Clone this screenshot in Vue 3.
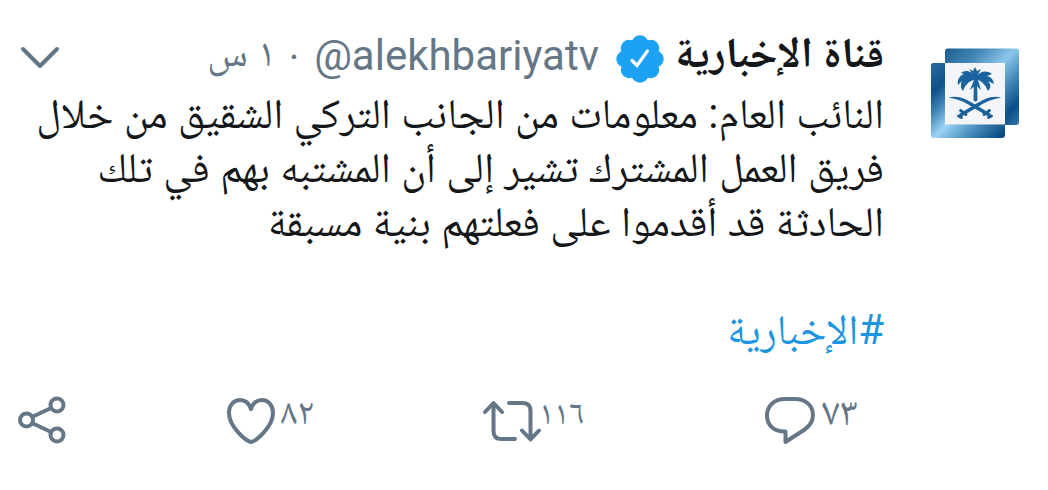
<template>
  <article class="tweet" dir="rtl">
    <div class="avatar">
      <svg viewBox="0 0 90 92" width="90" height="92">
        <defs>
          <linearGradient id="back" x1="0" y1="0" x2="1" y2="1">
            <stop offset="0" stop-color="#1b5c90" />
            <stop offset="0.25" stop-color="#4488b7" />
            <stop offset="0.48" stop-color="#8cc6ea" />
            <stop offset="0.68" stop-color="#3f83b4" />
            <stop offset="0.85" stop-color="#0b4f88" />
            <stop offset="1" stop-color="#3477a8" />
          </linearGradient>
          <linearGradient id="front" x1="0" y1="0.1" x2="0.9" y2="1">
            <stop offset="0" stop-color="#22669c" />
            <stop offset="0.18" stop-color="#0f5189" />
            <stop offset="0.32" stop-color="#3c80b2" />
            <stop offset="0.52" stop-color="#9bd3f5" />
            <stop offset="0.75" stop-color="#4b8fbd" />
            <stop offset="1" stop-color="#0d4d83" />
          </linearGradient>
        </defs>
        <rect x="15" y="1.500" width="74" height="76.500" rx="3" fill="url(#back)" />
        <path d="M3 16H15V77.500H75V88Q75 91 72 91H4Q1 91 1 88V18Q1 16 3 16Z" fill="url(#front)" />
        <rect x="15" y="16" width="60" height="61.500" fill="#f3f5f9" />
        <g fill="#1b649f">
          <path d="M44 32H47L47.500 53Q45.500 56 43.500 53Z" />
          <path d="M45 31C43 24 35 22 31 26L34 27C29 29 27 33 28 38L32 34C30 38 31 42 33 44C35 38 39 34 44 33L40 43C45 40 46 36 46 33C46 37 47 40 51 43L48 33C53 35 56 39 58 44C62 40 60 36 58 34L64 37C63 32 61 30 57 29L62 27C57 23 50 24 47 29L51 22L47 24L45 20L43 24L39 22Z" />
          <path d="M18.500 50.500C28 48 36 52 46 58L61 67L59 70L44 61C35 55 28 52 18.500 50.500Z" />
          <path d="M71.500 50.500C62 48 54 52 44 58L29 67L31 70L46 61C55 55 62 52 71.500 50.500Z" />
        </g>
        <g fill="none" stroke="#1b5f93" stroke-width="2.800" stroke-linecap="round">
          <path d="M30.500 63.500 36 67.500M28.500 69 31.500 70.500" />
          <path d="M59.500 63.500 54 67.500M61.500 69 58.500 70.500" />
        </g>
      </svg>
    </div>

    <div class="main">
      <header class="head">
        <span class="name">قناة الإخبارية</span>
        <svg class="badge" viewBox="0 0 48 48" width="48" height="48">
          <g fill="#1da1f2">
            <circle cx="24" cy="24" r="18" />
            <circle v-for="p in petals" :key="p.id" :cx="p.x" :cy="p.y" r="8.500" />
          </g>
          <path d="M16 25.500 21 30.500 31.500 16" fill="none" stroke="#fff" stroke-width="3.200" stroke-linecap="round" />
        </svg>
        <span class="handle" dir="ltr">@alekhbariyatv</span>
        <span class="dot">·</span>
        <span class="time">١ س</span>
        <svg class="chevron" viewBox="0 0 40 24" width="40" height="24">
          <path d="M3 3 20 20 37 3" />
        </svg>
      </header>

      <div class="content">
        <p v-for="line in lines" :key="line" class="line">{{ line }}</p>
        <p class="line"></p>
        <p class="line tag">#الإخبارية</p>
      </div>

      <footer class="actions">
        <div class="action reply">
          <span>٧٣</span>
          <svg viewBox="0 0 50 48" width="50" height="48">
            <path d="M20 2H30C41 2 48 9 48 18C48 24 45 29 39 33L20.500 45V34.500C9 35 2 28 2 18.500C2 9 9 2 20 2Z" />
          </svg>
        </div>
        <div class="action retweet">
          <span>١١٦</span>
          <svg viewBox="0 0 58 42" width="58" height="42">
            <path d="M2 12 10.500 3 19 12M10.500 4V31Q10.500 39 18.500 39H32" />
            <path d="M26 3H40Q47.500 3 47.500 11V38M39 30.500 47.500 39.500 56 30.500" />
          </svg>
        </div>
        <div class="action like">
          <span>٨٢</span>
          <svg viewBox="0 0 48 46" width="48" height="46">
            <path d="M24 44C19 43 2 29 2 15C2 7 7 2 13 2C18 2 22 5 24 11C26 5 30 2 35 2C41 2 46 7 46 15C46 29 29 43 24 44Z" />
          </svg>
        </div>
        <div class="action share">
          <svg viewBox="0 0 48 48" width="48" height="48">
            <path d="M15 20.500 32 12.500M15 27.500 32 35.500" />
            <circle cx="8.500" cy="24" r="6.500" />
            <circle cx="39" cy="9" r="6.500" />
            <circle cx="39" cy="39" r="6.500" />
          </svg>
        </div>
      </footer>
    </div>
  </article>
</template>

<script setup>
const lines = [
  "النائب العام: معلومات من الجانب التركي الشقيق من خلال",
  "فريق العمل المشترك تشير إلى أن المشتبه بهم في تلك",
  "الحادثة قد أقدموا على فعلتهم بنية مسبقة",
];

// scalloped edge of the verified badge
const petals = Array.from({ length: 8 }, (_, i) => ({
  id: i,
  x: 24 + 15.2 * Math.cos((i * Math.PI) / 4),
  y: 24 + 15.2 * Math.sin((i * Math.PI) / 4),
}));
</script>

<style>
body {
  background: #fff;
}
</style>

<style scoped>
.tweet {
  box-sizing: border-box;
  width: 1048px;
  height: 490px;
  display: flex;
  padding: 30px 28px 0 18px;
  overflow: hidden;
  color: #14171a;
  font-family: Roboto, "Noto Naskh Arabic", "Noto Sans Arabic", "Liberation Serif", serif;
}

.avatar {
  flex: none;
  width: 90px;
  margin-left: 46px;
  padding-top: 17px;
}

svg {
  display: block;
  flex: none;
}

.main {
  flex: 1;
  min-width: 0;
}

.head {
  display: flex;
  align-items: center;
  height: 54px;
  color: #657786;
  white-space: nowrap;
}

.name {
  width: 207px;
  margin-bottom: 9px;
  color: #14171a;
  font-size: 42.4px;
  line-height: 54px;
  font-weight: 700;
}

.badge {
  margin-top: 3px;
  margin-right: 13px;
}

.handle {
  margin-right: 17px;
  margin-bottom: 3px;
  font-size: 42px;
}

.dot {
  margin-right: 15px;
  font-size: 40px;
}

.time {
  margin-right: 13px;
  font-size: 40px;
}

.chevron {
  margin-top: 2px;
  margin-right: auto;
  margin-left: 2px;
}

.chevron path,
.action path,
.action circle {
  fill: none;
  stroke: #657786;
  stroke-width: 4;
  stroke-linecap: round;
  stroke-linejoin: round;
}

.content {
  padding-top: 3px;
}

.line {
  height: 54px;
  margin: 0;
  font-size: 42px;
  line-height: 54px;
  white-space: nowrap;
}

.tag {
  color: #1b95e0;
}

.actions {
  display: flex;
  align-items: flex-start;
  height: 60px;
  margin-top: 39px;
  padding-right: 26px;
}

.action {
  display: flex;
  justify-content: space-between;
  color: #657786;
  font-size: 37px;
  line-height: 32px;
}

.reply {
  width: 93px;
  margin-left: 181px;
}

.reply span {
  font-size: 40px;
}

.reply svg {
  margin-top: 1px;
}

.retweet {
  width: 101px;
  margin-left: 169px;
}

.retweet span {
  width: 43px;
  font-size: 33.5px;
  line-height: 33px;
}

.retweet svg {
  margin-top: 4px;
}

.like {
  width: 87px;
  margin-left: 161px;
}

.like svg {
  margin-top: 2px;
}
</style>
